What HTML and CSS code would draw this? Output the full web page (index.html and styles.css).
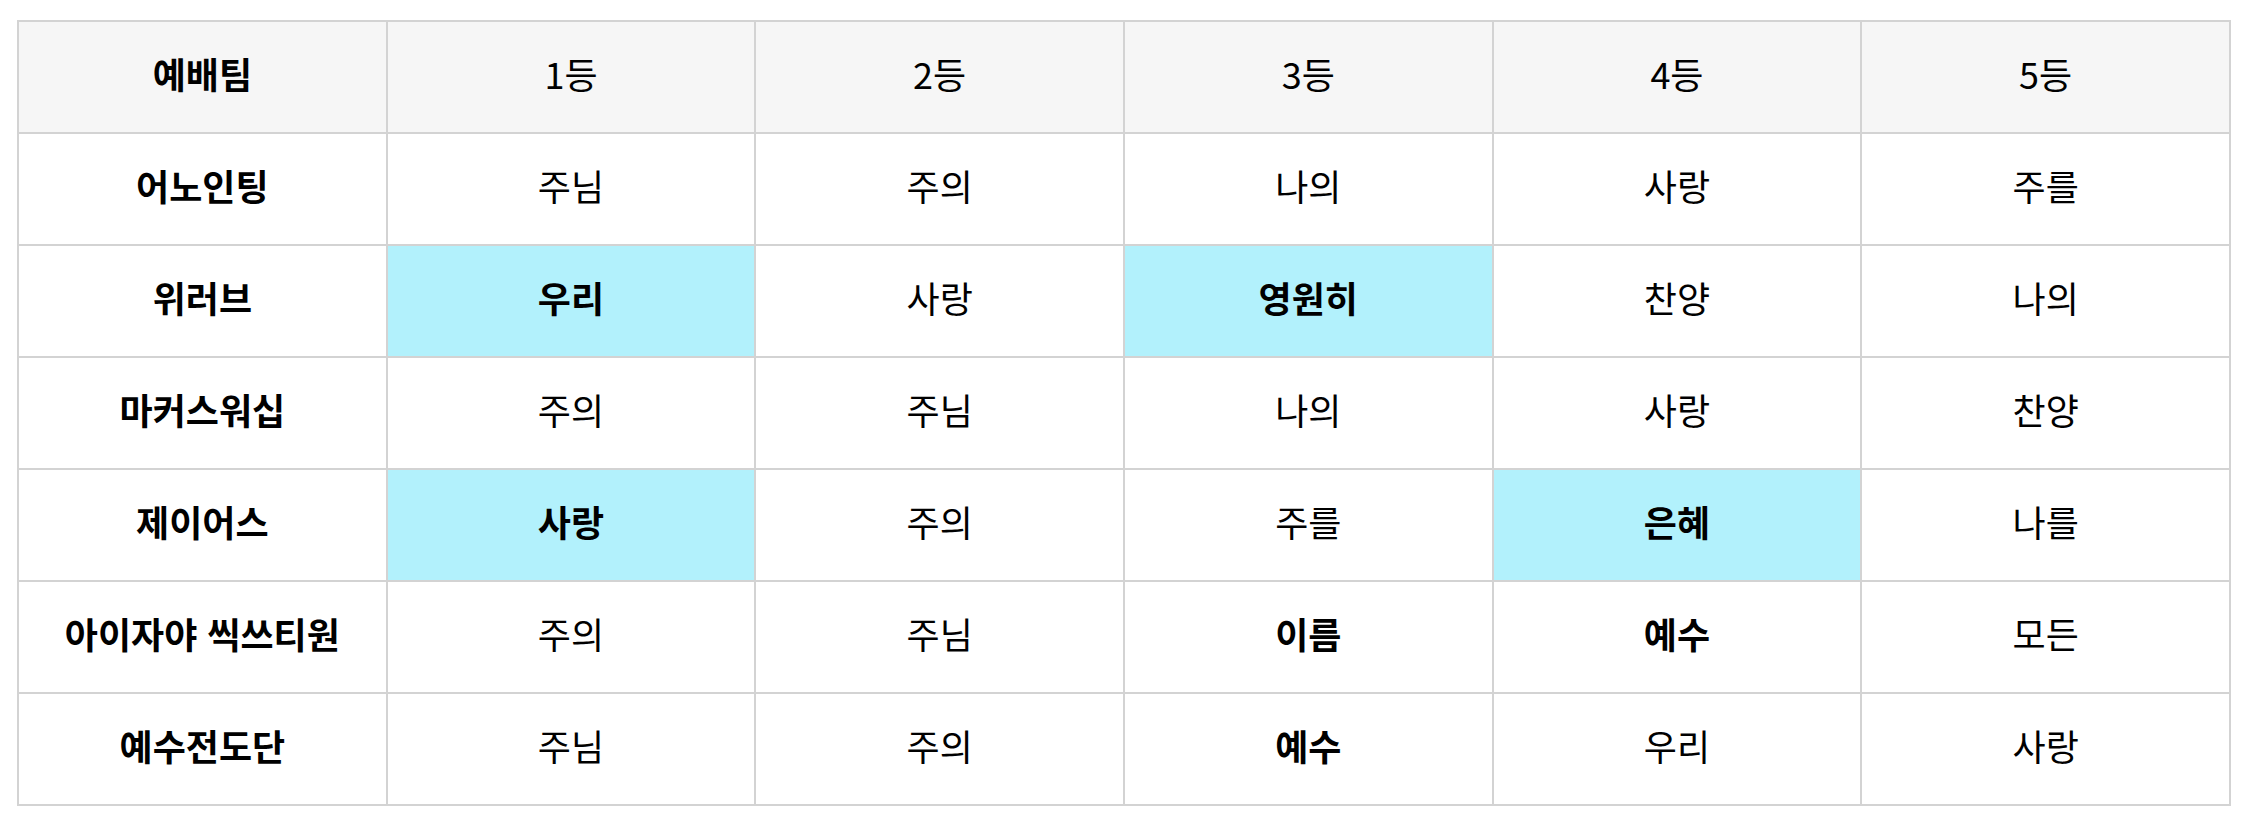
FILE: index.html
```html
<!DOCTYPE html>
<html lang="ko">
<head>
<meta charset="utf-8">
<title>예배팀 순위</title>
<link rel="stylesheet" href="styles.css">
</head>
<body>
<div class="wrap">
<table class="rank">
<thead>
<tr><th class="team">예배팀</th><th>1등</th><th>2등</th><th>3등</th><th>4등</th><th>5등</th></tr>
</thead>
<tbody>
<tr><th class="team">어노인팅</th><td>주님</td><td>주의</td><td>나의</td><td>사랑</td><td>주를</td></tr>
<tr><th class="team">위러브</th><td class="hit">우리</td><td>사랑</td><td class="hit">영원히</td><td>찬양</td><td>나의</td></tr>
<tr><th class="team">마커스워십</th><td>주의</td><td>주님</td><td>나의</td><td>사랑</td><td>찬양</td></tr>
<tr><th class="team">제이어스</th><td class="hit">사랑</td><td>주의</td><td>주를</td><td class="hit">은혜</td><td>나를</td></tr>
<tr><th class="team">아이자야 씩쓰티원</th><td>주의</td><td>주님</td><td class="strong">이름</td><td class="strong">예수</td><td>모든</td></tr>
<tr><th class="team">예수전도단</th><td>주님</td><td>주의</td><td class="strong">예수</td><td>우리</td><td>사랑</td></tr>
</tbody>
</table>
</div>
</body>
</html>
```

FILE: styles.css
```css
html, body {
  margin: 0;
  padding: 0;
  background: #ffffff;
}
.wrap {
  padding: 20px 19px 0 17px;
}
.rank {
  width: 2214px;
  border-collapse: collapse;
  table-layout: fixed;
  font-family: "Noto Sans CJK KR", "Noto Sans", sans-serif;
  font-size: 36px;
  line-height: 1.2;
  color: #000;
}
.rank th, .rank td {
  border: 2px solid #d3d3d3;
  height: 104px;
  padding: 0 0 6px 0;
  text-align: center;
  vertical-align: middle;
  font-weight: 400;
}
.rank thead th {
  background: #f6f6f6;
}
.rank th.team {
  font-weight: 700;
}
.rank td.hit {
  background: #b2f1fc;
  font-weight: 700;
}
.rank td.strong {
  font-weight: 700;
}
```
